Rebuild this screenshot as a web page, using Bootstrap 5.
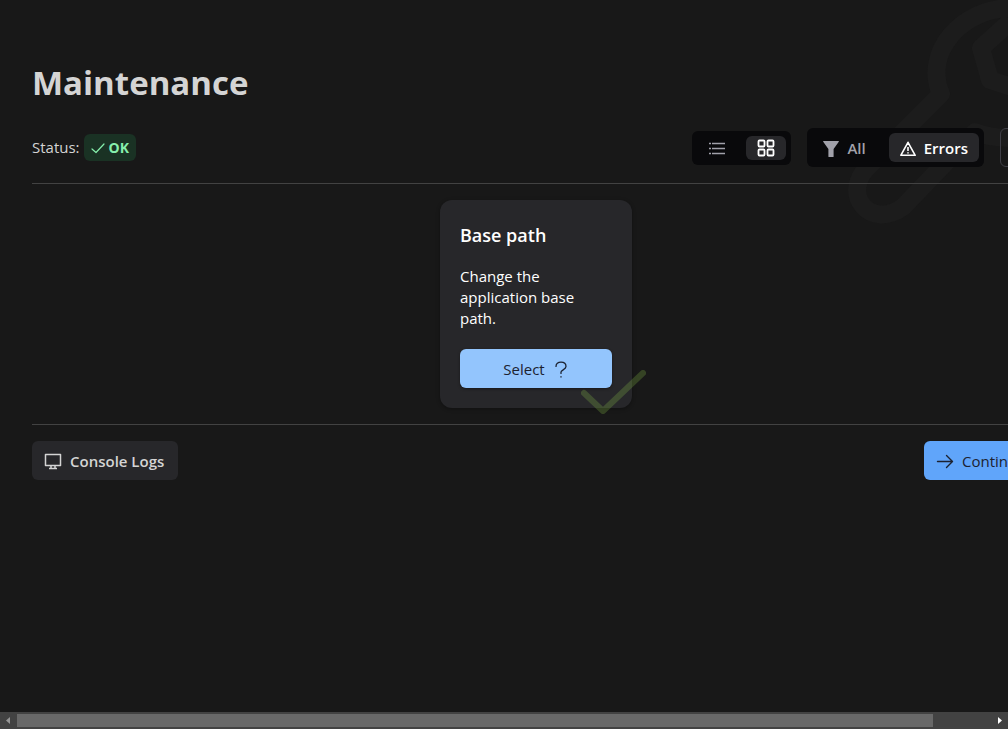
<!DOCTYPE html>
<html lang="en">
<head>
<meta charset="utf-8">
<meta name="viewport" content="width=device-width, initial-scale=1">
<title>Maintenance</title>
<link href="https://cdn.jsdelivr.net/npm/bootstrap@5.3.0/dist/css/bootstrap.min.css" rel="stylesheet">
<script src="https://cdn.jsdelivr.net/npm/bootstrap@5.3.0/dist/js/bootstrap.bundle.min.js" defer></script>
<style>
  body { background: #181818; color: #d4d4d4; font: 15px/21px "Open Sans", "Noto Sans", sans-serif; }
  svg { fill: none; stroke: currentColor; flex: none; }
  .viewport { overflow: hidden; }
  .content { min-width: 1072px; padding: 56px 32px 32px; }
  .wrench { top: 0; right: 0; color: #1c1c1c; }
  h1 { font-size: 33px; line-height: 54px; font-weight: 700; }
  .title-gap { margin-bottom: 18px; }
  .status-tag { background: #1a3224; color: #86efac; border-radius: 6px; font-size: 14px; font-weight: 700; padding: 3px 7px; }
  .rule { border-top: 1px solid #424242; }
  .segments { background: #09090b; border-radius: 6px; padding: 5px; }
  .segments .btn { border: 0; border-radius: 6px; padding: 3px 11px; color: #a1a1aa; font-size: 15px; line-height: 18px; font-weight: 600; }
  .segments .btn-tall { padding: 5px 11px 3px; line-height: 21px; }
  .segments .btn.active { background: #27272a; color: #fff; }
  .gap-seg { gap: 9px; }
  .gap-seg-wide { gap: 12px; }
  .btn-action { border: 0; border-radius: 6px; height: 39px; padding: 2px 12px 0; font-size: 15px; line-height: 21px; font-weight: 600; }
  .btn-quiet, .btn-quiet:hover { background: #27272a; color: #d4d4d4; width: 146px; }
  .btn-go, .btn-go:hover { background: #60a5fa; color: #1c2230; font-weight: 500; width: 116px; }
  .btn-pick, .btn-pick:hover { background: #93c5fd; color: #1c2230; font-weight: 500; box-shadow: 0 1px 3px #0006; }
  .btn-outline, .btn-outline:hover { border: 1px solid #3f3f46; color: #a1a1aa; width: 40px; }
  .task { background: #27272a; color: #fff; width: 192px; border-radius: 12px; padding: 20px; border: 0; box-shadow: 0 1px 4px #0005; }
  .task h2 { font-size: 18px; line-height: 30px; font-weight: 600; margin-bottom: 16px; }
  .task p { margin-bottom: 20px; }
  .done { right: -16px; bottom: -10px; color: #8bc34a; opacity: .25; pointer-events: none; }
  .scroller { height: 17px; background: #424242; padding: 2px 0; }
  .scroller .thumb { background: #686868; width: 94%; }
  .arrow { width: 17px; height: 13px; stroke: none; fill: #fff; }
</style>
</head>
<body class="d-flex flex-column vh-100">
<div class="viewport flex-grow-1 position-relative">
  <svg class="wrench position-absolute" width="168" height="226" viewBox="0 0 168 226" stroke-width="18" stroke-linejoin="round" aria-hidden="true">
    <path d="M172 8C121 8 83 53 101 94L27 168C1 195 31 230 63 207L135 132Q150 138 172 138M172 20L141 48L150 80L172 87"/>
  </svg>
  <main class="content position-relative">
    <h1 class="title-gap">Maintenance</h1>
    <header class="d-flex align-items-center justify-content-between">
      <div class="d-flex align-items-center gap-1"><span>Status:</span>
        <span class="status-tag d-flex align-items-center gap-1">
          <svg width="14" height="14" viewBox="0 0 14 14" stroke-width="1.2" stroke-linecap="round" stroke-linejoin="round"><path d="M1 8l4 3.500L13 3"/></svg>OK</span>
      </div>
      <div class="d-flex align-items-center gap-3">
        <div class="segments d-flex gap-seg" role="group" aria-label="Layout">
          <button type="button" class="btn d-flex align-items-center" aria-label="List"><svg width="18" height="18" viewBox="0 0 18 18" stroke-width="1.6"><path d="M4 4.500h13M4 9.500h13M4 14.500h13M1 4.500h2M1 9.500h2M1 14.500h2"/></svg></button>
          <button type="button" class="btn active d-flex align-items-center" aria-label="Grid"><svg width="18" height="18" viewBox="0 0 18 18" stroke-width="1.8"><rect x="1.500" y="1.500" width="6" height="6" rx="1"/><rect x="10.500" y="1.500" width="6" height="6" rx="1"/><rect x="1.500" y="10.500" width="6" height="6" rx="1"/><rect x="10.500" y="10.500" width="6" height="6" rx="1"/></svg></button>
        </div>
        <div class="segments d-flex gap-seg-wide" role="group" aria-label="Filter">
          <button type="button" class="btn btn-tall d-flex align-items-center gap-2"><svg width="16" height="16" viewBox="0 0 16 16"><path fill="currentColor" stroke="none" d="M.6 0h14.800q.8 0 .4.8L10.600 8v7.400q0 .6-.6.6H6q-.6 0-.6-.6V8L.2.8Q-.2 0 .6 0"/></svg>All</button>
          <button type="button" class="btn btn-tall active d-flex align-items-center gap-2"><svg width="16" height="16" viewBox="0 0 16 16" stroke-width="1.6" stroke-linejoin="round"><path d="M8 1.300L15.200 14.300H.8zM8 6v4M8 11.200v1.400"/></svg>Errors</button>
        </div>
        <button type="button" class="btn btn-action btn-outline" aria-label="Refresh"></button>
      </div>
    </header>
    <div class="rule my-3"></div>
    <div class="d-flex justify-content-center">
      <section class="card task">
        <h2>Base path</h2>
        <p>Change the application base path.</p>
        <button type="button" class="btn btn-action btn-pick d-flex align-items-center justify-content-center gap-2">Select
          <svg width="16" height="18" viewBox="0 0 16 18" stroke-width="1.3" stroke-linecap="round"><path d="M3 5.400C3 2.800 5 1.200 8 1.200s5 1.800 5 4.300c0 3-5 3.500-5 5.600v1.300M8 15.600v.4"/></svg></button>
        <svg class="done position-absolute" width="68" height="50" viewBox="0 0 68 50" stroke-width="6" stroke-linecap="round" stroke-linejoin="round" aria-hidden="true"><path d="M4 25l19 18L63 5"/></svg>
      </section>
    </div>
    <div class="rule my-3"></div>
    <footer class="d-flex justify-content-between">
      <button type="button" class="btn btn-action btn-quiet d-flex align-items-center gap-2"><svg width="18" height="18" viewBox="0 0 18 18" stroke-width="1.5" stroke-linejoin="round"><path d="M1.500 1.500h15v11h-15zM7 12.500v3.500M11 12.500v3.500M5 15.500h8"/></svg>Console Logs</button>
      <button type="button" class="btn btn-action btn-go d-flex align-items-center gap-2"><svg width="18" height="18" viewBox="0 0 18 18" stroke-width="1.4" stroke-linecap="round" stroke-linejoin="round"><path d="M1.500 8.500H16.500M10.500 2.500L16.500 8.500 10.500 14.500"/></svg>Continue</button>
    </footer>
  </main>
</div>
<div class="scroller d-flex" aria-hidden="true">
  <svg class="arrow" viewBox="0 0 17 13"><path fill="#969696" d="M10 3v7L6 6.500z"/></svg>
  <div class="flex-grow-1 d-flex"><div class="thumb"></div></div>
  <svg class="arrow" viewBox="0 0 17 13"><path d="M7 3v7l4-3.500z"/></svg>
</div>
</body>
</html>
